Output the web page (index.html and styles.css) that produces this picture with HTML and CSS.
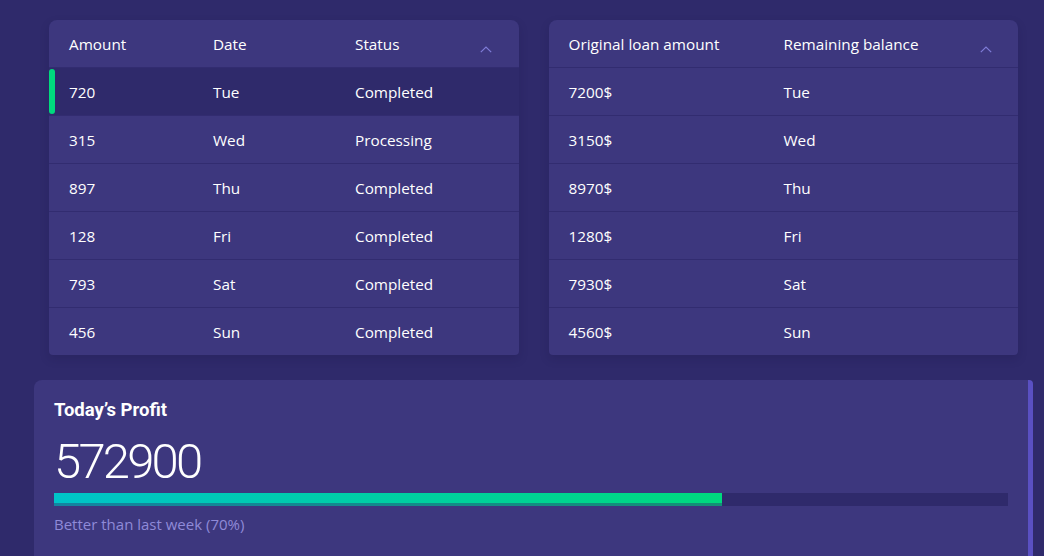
FILE: index.html
```html
<!DOCTYPE html>
<html>
<head>
<meta charset="utf-8">
<link rel="stylesheet" href="styles.css">
</head>
<body>
<div class="page">
  <div class="tables">
    <div class="card table three">
      <div class="row head">
        <span>Amount</span><span>Date</span><span>Status</span>
        <svg class="chev" width="12" height="7" viewBox="0 0 12 7"><polyline points="0.8,6.2 6,1 11.2,6.2" fill="none" stroke="#7f7cd8" stroke-width="1.2"/></svg>
      </div>
      <div class="row selected"><span>720</span><span>Tue</span><span>Completed</span></div>
      <div class="row"><span>315</span><span>Wed</span><span>Processing</span></div>
      <div class="row"><span>897</span><span>Thu</span><span>Completed</span></div>
      <div class="row"><span>128</span><span>Fri</span><span>Completed</span></div>
      <div class="row"><span>793</span><span>Sat</span><span>Completed</span></div>
      <div class="row"><span>456</span><span>Sun</span><span>Completed</span></div>
    </div>
    <div class="card table two">
      <div class="row head">
        <span>Original loan amount</span><span>Remaining balance</span>
        <svg class="chev" width="12" height="7" viewBox="0 0 12 7"><polyline points="0.8,6.2 6,1 11.2,6.2" fill="none" stroke="#7f7cd8" stroke-width="1.2"/></svg>
      </div>
      <div class="row"><span>7200$</span><span>Tue</span></div>
      <div class="row"><span>3150$</span><span>Wed</span></div>
      <div class="row"><span>8970$</span><span>Thu</span></div>
      <div class="row"><span>1280$</span><span>Fri</span></div>
      <div class="row"><span>7930$</span><span>Sat</span></div>
      <div class="row"><span>4560$</span><span>Sun</span></div>
    </div>
  </div>
  <div class="profit">
    <div class="profit-title">Today’s Profit</div>
    <div class="profit-value">572900</div>
    <div class="bar"><div class="fill" style="width:70%"></div></div>
    <div class="profit-note">Better than last week (70%)</div>
  </div>
</div>
</body>
</html>
```
FILE: styles.css
```css
* { box-sizing: border-box; }
html, body { margin: 0; padding: 0; }
body {
  background: #2f2a6b;
  font-family: "Open Sans", "Noto Sans", sans-serif;
  color: #ffffff;
  overflow: hidden;
  height: 556px;
}
.page {
  padding: 20px 11px 0 34px;
}
.tables {
  display: flex;
  gap: 30px;
  padding: 0 15px;
}
.card {
  flex: 1;
  background: #3d377e;
  border-radius: 8px 8px 4px 4px;
  box-shadow: 0 4px 10px rgba(20, 16, 60, 0.18);
}
.row {
  position: relative;
  display: grid;
  height: 48px;
  align-items: center;
  padding-left: 20px;
  font-size: 15.3px;
  border-top: 1px solid #322c70;
}
.row.head {
  height: 47px;
  border-top: none;
}
.row:last-child { border-radius: 0 0 4px 4px; }
.three .row { grid-template-columns: 144px 142px 1fr 12px; padding-right: 27px; }
.two .row { grid-template-columns: 215px 1fr 12px; padding-right: 26px; }
.row.selected { background: #2f2a6b; }
.row.selected::before {
  content: "";
  position: absolute;
  left: 0;
  top: 1px;
  bottom: 1px;
  width: 6px;
  border-radius: 3px;
  background: #00d97e;
}
.chev { align-self: center; margin-top: 12px; }
.profit {
  margin-top: 25px;
  background: #3d377e;
  border-radius: 8px 4px 0 0;
  border-right: 5px solid #5a50c2;
  padding: 20px 20px 40px 20px;
  height: 200px;
}
.profit-title {
  font-family: "Roboto", "Noto Sans", sans-serif;
  font-weight: 700;
  font-size: 18.5px;
  line-height: 20px;
}
.profit-value {
  margin-top: 12px;
  font-family: "Roboto", "Open Sans", sans-serif;
  font-weight: 300;
  font-size: 49px;
  line-height: 60px;
  letter-spacing: -2.8px;
  height: 61px;
}
.bar {
  height: 13px;
  background: #2f2a6b;
  width: 954px;
}
.fill {
  height: 100%;
  background: linear-gradient(90deg, #00c4c9, #00d97e);
  box-shadow: inset 0 -3px 0 rgba(47, 42, 107, 0.42);
}
.profit-note {
  margin-top: 8px;
  font-size: 15px;
  line-height: 20px;
  color: #8f8ad8;
}
```
